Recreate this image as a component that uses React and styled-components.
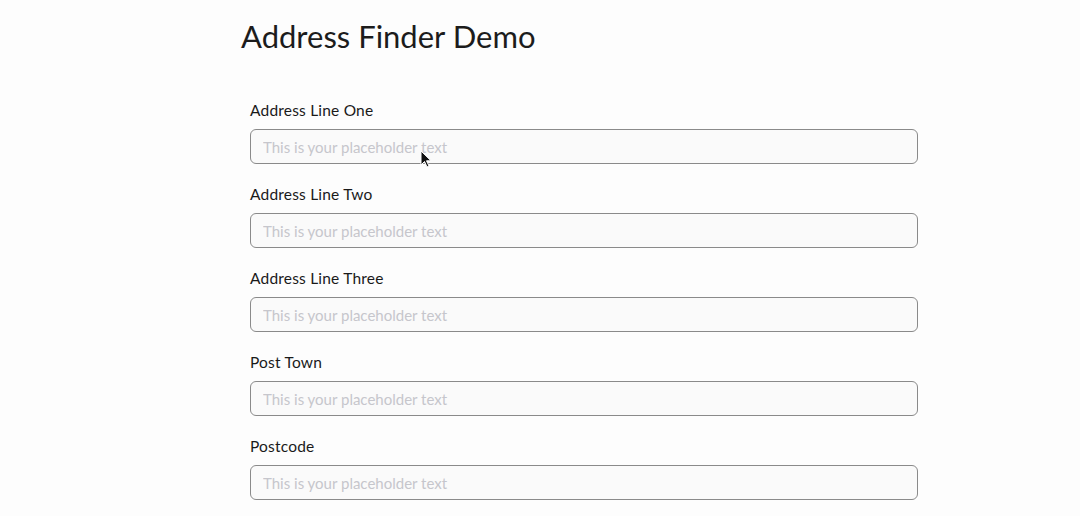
import React from "react";
import styled, { createGlobalStyle } from "styled-components";

const Global = createGlobalStyle`
  html, body { margin: 0; padding: 0; background: #fdfdfd; }
  body { font-family: Lato, "Noto Sans", sans-serif; color: #1a1a1a; }
  * { box-sizing: border-box; }
`;

const Page = styled.main`
  position: relative;
  width: 1080px;
  height: 516px;
  overflow: hidden;
  padding: 14px 0 0 241px;
`;

const Title = styled.h1`
  margin: 0;
  font-size: 31px;
  font-weight: 400;
  line-height: 44px;
  letter-spacing: 0;
  color: #1c1c1c;
`;

const Form = styled.form`
  display: flex;
  flex-direction: column;
  gap: 20px;
  margin-top: 42px;
  padding-left: 9px;
  width: 677px;
`;

const Field = styled.div`
  display: flex;
  flex-direction: column;
  gap: 9px;
`;

const Label = styled.label`
  font-size: 15.5px;
  line-height: 20px;
  color: #1a1a1a;
  letter-spacing: 0.2px;
`;

const Input = styled.input`
  width: 668px;
  height: 35px;
  border: 1px solid #8a8a8a;
  border-radius: 6px;
  background: #fafafa;
  padding: 0 12px;
  font-family: inherit;
  font-size: 15px;
  outline: none;
  &::placeholder { color: #c6c6cc; }
`;

const Cursor = styled.svg`
  position: absolute;
  left: 420px;
  top: 150px;
`;

const fields = [
  "Address Line One",
  "Address Line Two",
  "Address Line Three",
  "Post Town",
  "Postcode",
];

export default function App() {
  return (
    <>
      <Global />
      <Page>
        <Title>Address Finder Demo</Title>
        <Form onSubmit={(e) => e.preventDefault()}>
          {fields.map((f) => (
            <Field key={f}>
              <Label>{f}</Label>
              <Input placeholder="This is your placeholder text" />
            </Field>
          ))}
        </Form>
        <Cursor width="12" height="20" viewBox="0 0 12 20">
          <path d="M1 1 L1 15 L4.5 11.5 L7 17 L9 16 L6.5 10.8 L11 10.8 Z" fill="#111" stroke="#fff" strokeWidth="1" />
        </Cursor>
      </Page>
    </>
  );
}
